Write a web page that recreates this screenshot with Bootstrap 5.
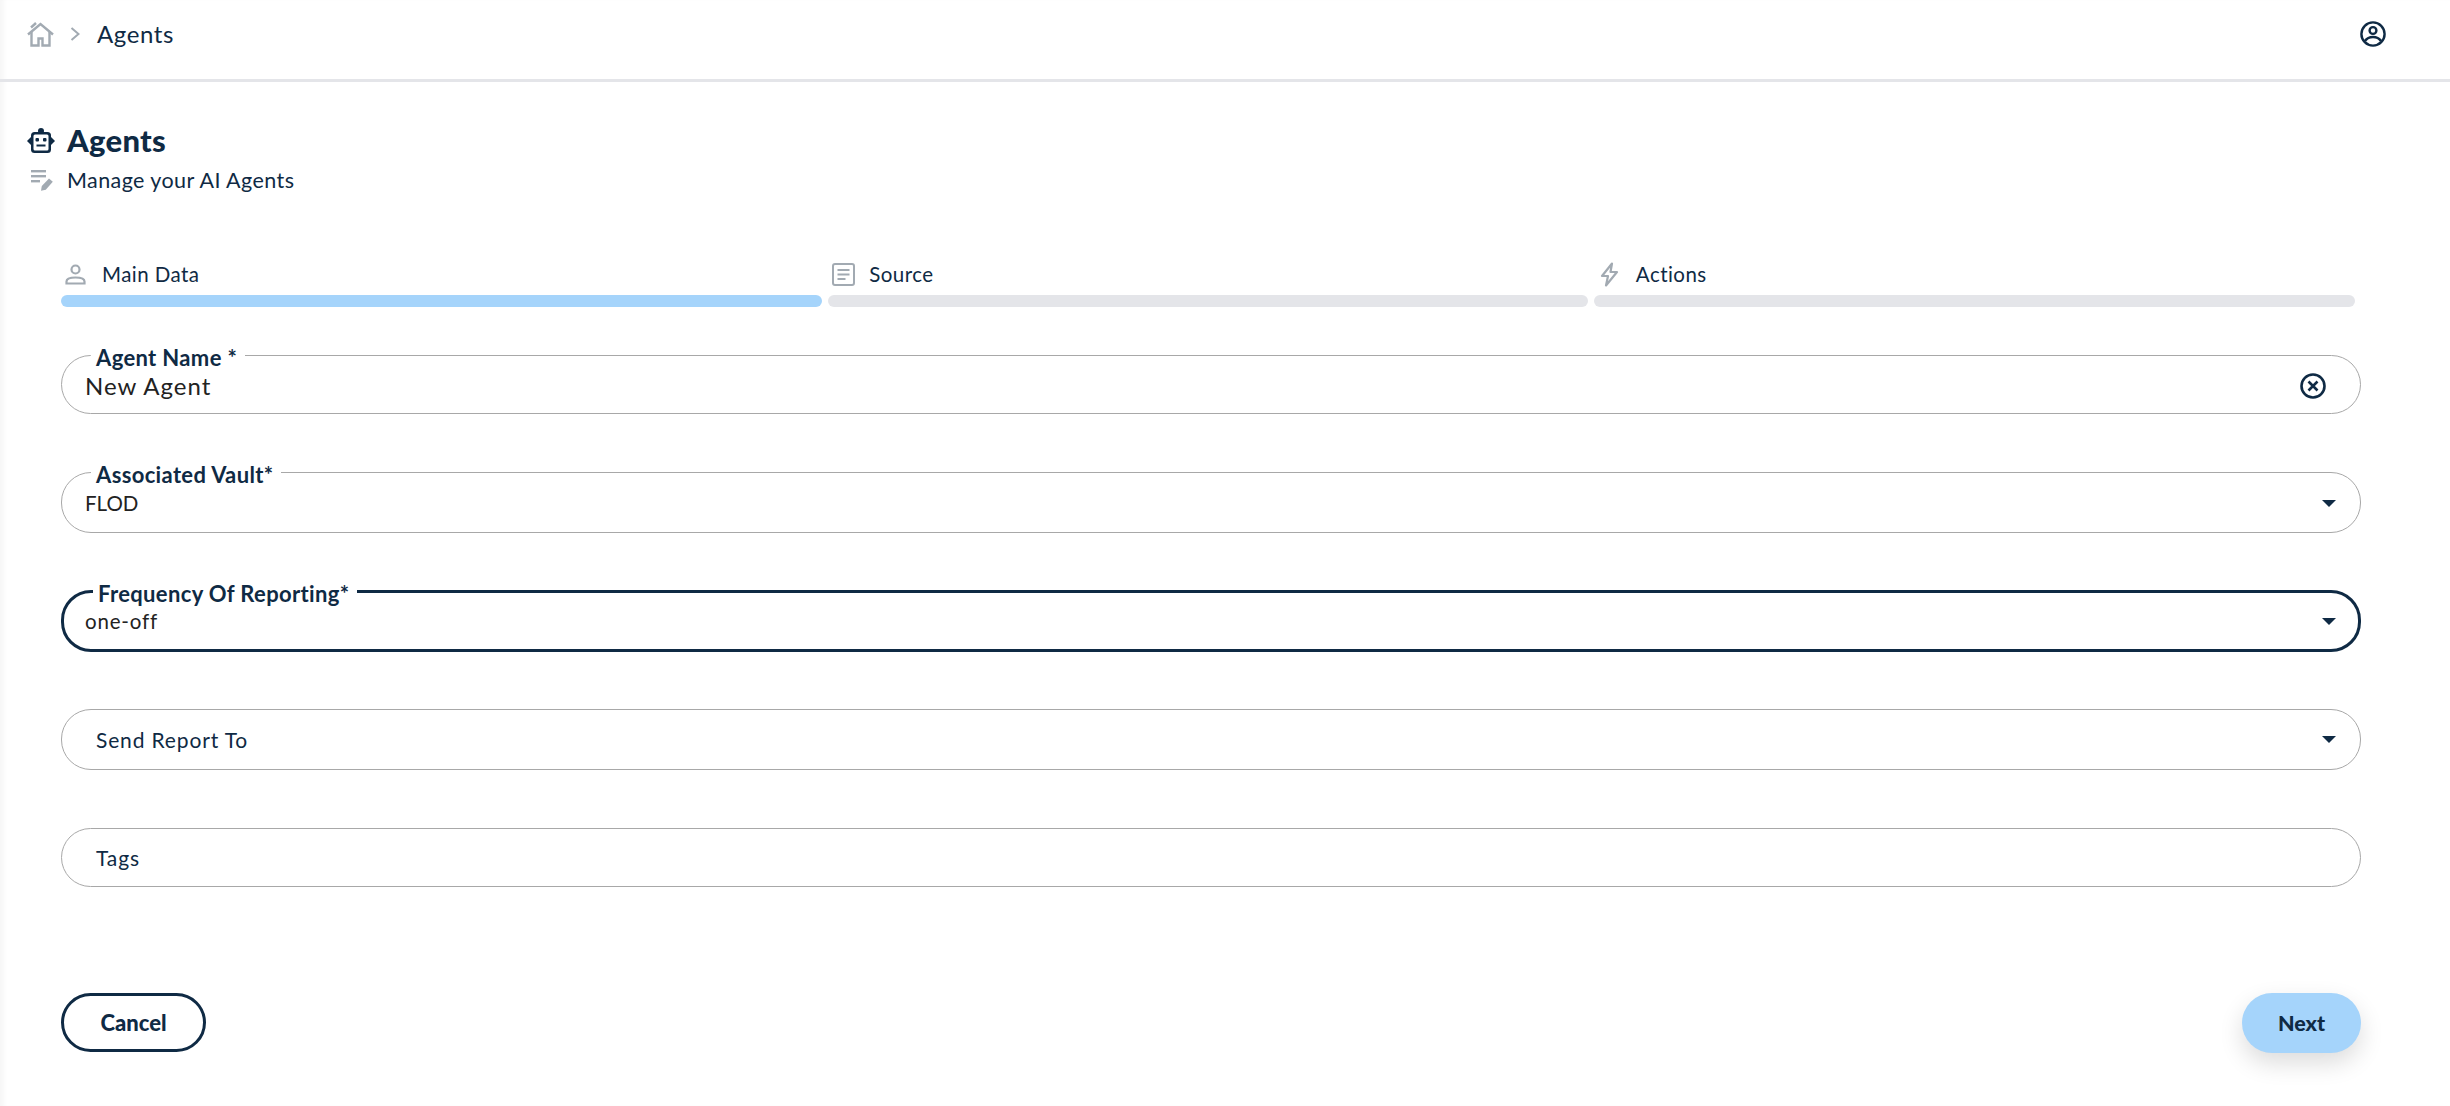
<!DOCTYPE html>
<html lang="en">
<head>
    <meta charset="UTF-8">
    <title>Agents</title>
    <link rel="stylesheet" href="https://cdn.jsdelivr.net/npm/bootstrap@5.3.0/dist/css/bootstrap.min.css">
    <style>
        body {
            font-family: "Lato", "Liberation Sans", sans-serif;
            color: #0f2a44;
            background: #fff;
            box-shadow: inset 6px 0 4px -2px #f7f7f7;
            min-height: 1106px;
            overflow: hidden;
        }
        .top-bar { height: 82px; border-bottom: 3px solid #e4e5e9; padding: 0 64px 11px 27px; }
        .crumb-text { font-size: 24px; letter-spacing: .6px; margin-left: 17px; }
        .page-head { padding: 40px 0 0 27px; }
        .page-title { font-size: 31px; font-weight: 900; letter-spacing: .3px; line-height: 36px; margin: 0 0 7px 13px; }
        .page-sub { font-size: 21.5px; letter-spacing: .42px; line-height: 30px; margin: 0 0 0 14px; }
        .form-wrap { padding: 58px 89px 0 61px; }
        .step-row { margin-bottom: 33px; }
        .step-item { flex: 1; margin-right: 6px; }
        .step-label { font-size: 20.5px; letter-spacing: .45px; height: 42px; }
        .step-gap { margin-right: 14.5px; }
        .step-bar { height: 12px; border-radius: 6px; background: #e4e5e9; }
        .step-bar.on { background: #a5d4fb; }
        .fld {
            border: 1px solid #a8a8a8;
            border-radius: 30px;
            padding: 0 24px 0 23px;
            min-width: 0;
            height: 61px;
            margin: 0 0 58px;
        }
        fieldset.fld { height: 76px; margin-bottom: 43px; }
        fieldset.fld.short { height: 74px; }
        div.fld.short { height: 59px; }
        .fld legend {
            float: none;
            width: auto;
            font-size: 22px;
            font-weight: 700;
            letter-spacing: .35px;
            line-height: 24px;
            padding: 6px 8px 0 5px;
            margin: 0 0 0 6px;
        }
        fieldset.fld.active { border: 3px solid #0f2a44; padding-left: 21px; padding-right: 22px; height: 76px; margin-bottom: 57px; }
        .fld.active legend { margin-left: 8px; }
        .fld-row { height: 32px; }
        .active .fld-row { height: 30px; }
        .fld-val { font-size: 20.5px; letter-spacing: .8px; color: #222; line-height: 24px; }
        .fld-val.caps { letter-spacing: 0; }
        .fld-val.big { font-size: 24px; letter-spacing: 1px; line-height: 28px; }
        .fld-plain { font-size: 21px; letter-spacing: .85px; padding-left: 11px; }
        .btn-cancel, .btn-cancel:hover {
            width: 145px; height: 59px; border: 3px solid #0f2a44; border-radius: 30px;
            color: #0f2a44; background: #fff; font-size: 22px; font-weight: 900;
        }
        .btn-next, .btn-next:hover {
            width: 119px; height: 60px; border: 0; border-radius: 30px;
            color: #0f2a44; background: #a5d4fb; font-size: 21.5px; font-weight: 900;
            box-shadow: 0 10px 24px rgba(0,0,0,.14);
        }
        .clear-btn { margin-right: 10px; }
        .form-foot { margin-top: 106px; }
    </style>
</head>
<body>
<div class="top-bar d-flex align-items-center justify-content-between">
    <div class="d-flex align-items-center">
        <svg width="27" height="26" viewBox="0 0 27 26" fill="none" stroke="#a2aab2" stroke-width="2.4">
            <path d="M1 13.500 13.500 3 26 13.500"/><path d="M4.500 10.500v14h7v-7h4v7h7v-14"/><path d="M4 6.500l5-4.500"/>
        </svg>
        <svg class="ms-3" width="10" height="14" viewBox="0 0 10 14" fill="none" stroke="#a2aab2" stroke-width="2"><path d="M1.500 1l7 6-7 6"/></svg>
        <span class="crumb-text">Agents</span>
    </div>
    <svg width="26" height="26" viewBox="0 0 26 26" fill="none" stroke="#0f2a44" stroke-width="2.4">
        <circle cx="13" cy="13" r="11.600"/><circle cx="13" cy="9.500" r="3.400"/><path d="M5 20c2-3 5-4 8-4s6 1 8 4"/>
    </svg>
</div>

<div class="page-head">
    <div class="d-flex align-items-center">
        <svg width="28" height="25" viewBox="0 0 28 25">
            <circle cx="14" cy="3" r="3" fill="#0f2a44"/>
            <path fill="#0f2a44" d="M0 13l4-4v8zM28 13l-4-4v8z"/>
            <rect x="4" y="4" width="20" height="21" rx="3.500" fill="#0f2a44"/>
            <rect x="6.500" y="6.500" width="15" height="16" rx="1.500" fill="#fff"/>
            <rect x="8.500" y="10" width="3.500" height="3.500" rx="1" fill="#0f2a44"/><rect x="16" y="10" width="3.500" height="3.500" rx="1" fill="#0f2a44"/><rect x="9.500" y="16.500" width="9" height="2" fill="#0f2a44"/>
        </svg>
        <h1 class="page-title mb-0" style="margin-left:12px">Agents</h1>
    </div>
    <div class="d-flex align-items-center" style="margin-top:7px">
        <svg class="ms-1" width="22" height="21" viewBox="0 0 22 21" fill="#a2aab2">
            <rect y="0" width="15" height="2.400"/><rect y="5" width="15" height="2.400"/><rect y="10" width="9" height="2.400"/>
            <path d="M18 8.500l3.800 3.200-7 8-4.800 1 .8-4.800z"/>
        </svg>
        <p class="page-sub">Manage your AI Agents</p>
    </div>
</div>

<div class="form-wrap">
    <div class="step-row d-flex">
        <div class="step-item">
            <div class="step-label d-flex align-items-center">
                <svg class="ms-1 me-3" width="21" height="21" viewBox="0 0 21 21" fill="none" stroke="#a2aab2" stroke-width="2.200"><circle cx="10.500" cy="5.500" r="4"/><path d="M1.500 19.500v-2c0-2.500 3-4 9-4s9 1.500 9 4v2z"/></svg>
                <span>Main Data</span>
            </div>
            <div class="step-bar on"></div>
        </div>
        <div class="step-item">
            <div class="step-label d-flex align-items-center">
                <svg class="ms-1 step-gap" width="23" height="23" viewBox="0 0 23 23" fill="none" stroke="#a2aab2" stroke-width="2"><rect x="1" y="1" width="21" height="21" rx="2"/><path d="M5.500 7h12M5.500 11.500h12M5.500 16h8"/></svg>
                <span>Source</span>
            </div>
            <div class="step-bar"></div>
        </div>
        <div class="step-item">
            <div class="step-label d-flex align-items-center">
                <svg class="ms-1 step-gap" width="23" height="25" viewBox="-2 0 23 25" fill="none" stroke="#a2aab2" stroke-width="2.200" stroke-linejoin="round"><path d="M12 1.500 2 14h6l-2 9.500L17 10h-6.500z"/></svg>
                <span>Actions</span>
            </div>
            <div class="step-bar"></div>
        </div>
    </div>

    <form onsubmit="return false">
        <fieldset class="fld short">
            <legend>Agent Name *</legend>
            <div class="fld-row d-flex align-items-center justify-content-between">
                <div class="fld-val big">New Agent</div>
                <svg class="clear-btn" width="26" height="26" viewBox="0 0 26 26" fill="none" stroke="#0f2a44" stroke-width="2.600"><circle cx="13" cy="13" r="11.500"/><path d="M8.500 8.500l9 9M17.500 8.500l-9 9"/></svg>
            </div>
        </fieldset>
        <fieldset class="fld">
            <legend>Associated Vault*</legend>
            <div class="fld-row d-flex align-items-center justify-content-between">
                <div class="fld-val caps">FLOD</div>
                <svg width="14" height="7" viewBox="0 0 14 7" fill="#0f2a44"><path d="M0 0h14L7 7z"/></svg>
            </div>
        </fieldset>
        <fieldset class="fld active">
            <legend>Frequency Of Reporting*</legend>
            <div class="fld-row d-flex align-items-center justify-content-between">
                <div class="fld-val">one-off</div>
                <svg width="14" height="7" viewBox="0 0 14 7" fill="#0f2a44"><path d="M0 0h14L7 7z"/></svg>
            </div>
        </fieldset>
        <div class="fld d-flex align-items-center justify-content-between">
            <div class="fld-plain">Send Report To</div>
            <svg width="14" height="7" viewBox="0 0 14 7" fill="#0f2a44"><path d="M0 0h14L7 7z"/></svg>
        </div>
        <div class="fld short d-flex align-items-center mb-0">
            <div class="fld-plain">Tags</div>
        </div>
        <div class="form-foot d-flex justify-content-between">
            <button type="button" class="btn btn-cancel">Cancel</button>
            <button type="button" class="btn btn-next">Next</button>
        </div>
    </form>
</div>

<script src="https://cdn.jsdelivr.net/npm/bootstrap@5.3.0/dist/js/bootstrap.bundle.min.js"></script>
</body>
</html>
